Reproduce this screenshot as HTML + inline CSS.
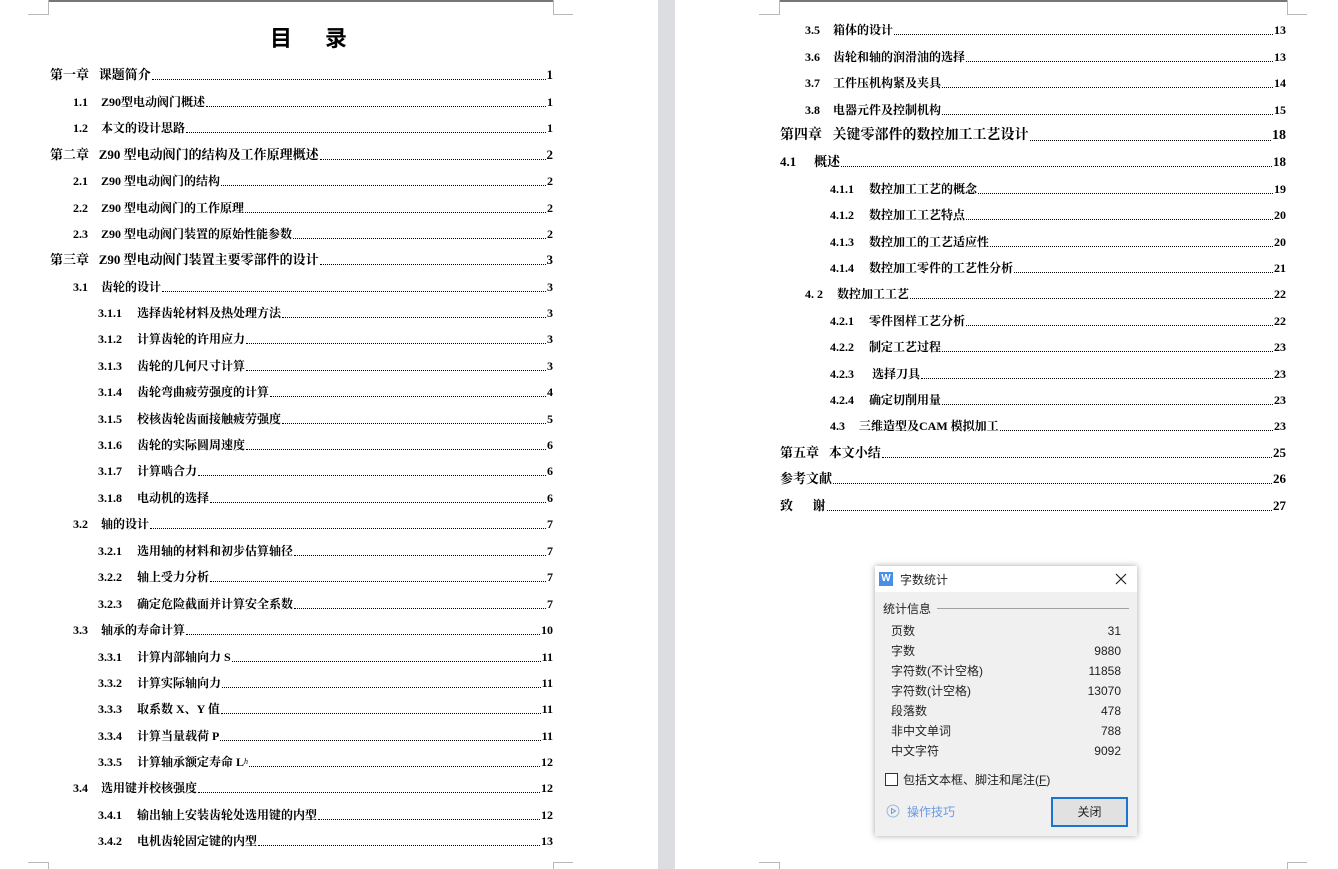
<!DOCTYPE html>
<html><head><meta charset="utf-8"><style>
body{margin:0;width:1338px;height:869px;background:#fff;position:relative;overflow:hidden;font-family:"Liberation Serif","Noto Serif CJK SC",serif;}
.gap{position:absolute;left:658px;top:0;width:17px;height:869px;background:#dcdde0}
.m{position:absolute;background:#b8b8b8}
.r{position:absolute;display:flex;align-items:flex-end;height:16px;line-height:16px;font-size:12px;font-weight:bold;color:#000;white-space:nowrap}
.r .d{flex:1;border-bottom:1px dotted #000;margin:0 1px 3px 1px}
.c{font-size:13px}
.n{display:inline-block}
.dlg{position:absolute;left:875px;top:566px;width:262px;height:270px;background:#f0f0f0;box-shadow:0 0 6px rgba(0,0,0,.35);font-family:"Liberation Sans","Noto Sans CJK SC",sans-serif;font-size:12px;color:#222}
</style></head><body>
<div class="gap"></div>
<div class="m" style="left:48px;top:0;width:505px;height:2px;background:#777"></div>
<div class="m" style="left:28px;top:14px;width:20px;height:1px"></div>
<div class="m" style="left:48px;top:0;width:1px;height:15px"></div>
<div class="m" style="left:553px;top:14px;width:20px;height:1px"></div>
<div class="m" style="left:553px;top:0;width:1px;height:15px"></div>
<div class="m" style="left:28px;top:862px;width:20px;height:1px"></div>
<div class="m" style="left:48px;top:862px;width:1px;height:7px"></div>
<div class="m" style="left:553px;top:862px;width:20px;height:1px"></div>
<div class="m" style="left:553px;top:862px;width:1px;height:7px"></div>
<div class="m" style="left:779px;top:0;width:508px;height:2px;background:#777"></div>
<div class="m" style="left:759px;top:14px;width:20px;height:1px"></div>
<div class="m" style="left:779px;top:0;width:1px;height:15px"></div>
<div class="m" style="left:1287px;top:14px;width:20px;height:1px"></div>
<div class="m" style="left:1287px;top:0;width:1px;height:15px"></div>
<div class="m" style="left:759px;top:862px;width:20px;height:1px"></div>
<div class="m" style="left:779px;top:862px;width:1px;height:7px"></div>
<div class="m" style="left:1287px;top:862px;width:20px;height:1px"></div>
<div class="m" style="left:1287px;top:862px;width:1px;height:7px"></div>

<div style="position:absolute;left:270px;top:24px;font-size:22px;font-weight:bold;font-family:'Noto Sans CJK SC',sans-serif;line-height:26px">目</div>
<div style="position:absolute;left:325px;top:24px;font-size:22px;font-weight:bold;font-family:'Noto Sans CJK SC',sans-serif;line-height:26px">录</div>

<div class="r c" style="left:50px;width:503px;top:67px">第一章&nbsp;&nbsp;&nbsp;课题简介<span class="d"></span>1</div>
<div class="r" style="left:73px;width:480px;top:94px"><span class="n" style="width:28px">1.1</span>Z90型电动阀门概述<span class="d"></span>1</div>
<div class="r" style="left:73px;width:480px;top:120px"><span class="n" style="width:28px">1.2</span>本文的设计思路<span class="d"></span>1</div>
<div class="r c" style="left:50px;width:503px;top:147px">第二章&nbsp;&nbsp;&nbsp;Z90 型电动阀门的结构及工作原理概述<span class="d"></span>2</div>
<div class="r" style="left:73px;width:480px;top:173px"><span class="n" style="width:28px">2.1</span>Z90 型电动阀门的结构<span class="d"></span>2</div>
<div class="r" style="left:73px;width:480px;top:200px"><span class="n" style="width:28px">2.2</span>Z90 型电动阀门的工作原理<span class="d"></span>2</div>
<div class="r" style="left:73px;width:480px;top:226px"><span class="n" style="width:28px">2.3</span>Z90 型电动阀门装置的原始性能参数<span class="d"></span>2</div>
<div class="r c" style="left:50px;width:503px;top:252px">第三章&nbsp;&nbsp;&nbsp;Z90 型电动阀门装置主要零部件的设计<span class="d"></span>3</div>
<div class="r" style="left:73px;width:480px;top:279px"><span class="n" style="width:28px">3.1</span>齿轮的设计<span class="d"></span>3</div>
<div class="r" style="left:98px;width:455px;top:305px"><span class="n" style="width:39px">3.1.1</span>选择齿轮材料及热处理方法<span class="d"></span>3</div>
<div class="r" style="left:98px;width:455px;top:331px"><span class="n" style="width:39px">3.1.2</span>计算齿轮的许用应力<span class="d"></span>3</div>
<div class="r" style="left:98px;width:455px;top:358px"><span class="n" style="width:39px">3.1.3</span>齿轮的几何尺寸计算<span class="d"></span>3</div>
<div class="r" style="left:98px;width:455px;top:384px"><span class="n" style="width:39px">3.1.4</span>齿轮弯曲疲劳强度的计算<span class="d"></span>4</div>
<div class="r" style="left:98px;width:455px;top:411px"><span class="n" style="width:39px">3.1.5</span>校核齿轮齿面接触疲劳强度<span class="d"></span>5</div>
<div class="r" style="left:98px;width:455px;top:437px"><span class="n" style="width:39px">3.1.6</span>齿轮的实际圆周速度<span class="d"></span>6</div>
<div class="r" style="left:98px;width:455px;top:463px"><span class="n" style="width:39px">3.1.7</span>计算啮合力<span class="d"></span>6</div>
<div class="r" style="left:98px;width:455px;top:490px"><span class="n" style="width:39px">3.1.8</span>电动机的选择<span class="d"></span>6</div>
<div class="r" style="left:73px;width:480px;top:516px"><span class="n" style="width:28px">3.2</span>轴的设计<span class="d"></span>7</div>
<div class="r" style="left:98px;width:455px;top:543px"><span class="n" style="width:39px">3.2.1</span>选用轴的材料和初步估算轴径<span class="d"></span>7</div>
<div class="r" style="left:98px;width:455px;top:569px"><span class="n" style="width:39px">3.2.2</span>轴上受力分析<span class="d"></span>7</div>
<div class="r" style="left:98px;width:455px;top:596px"><span class="n" style="width:39px">3.2.3</span>确定危险截面并计算安全系数<span class="d"></span>7</div>
<div class="r" style="left:73px;width:480px;top:622px"><span class="n" style="width:28px">3.3</span>轴承的寿命计算<span class="d"></span>10</div>
<div class="r" style="left:98px;width:455px;top:649px"><span class="n" style="width:39px">3.3.1</span>计算内部轴向力 S<span class="d"></span>11</div>
<div class="r" style="left:98px;width:455px;top:675px"><span class="n" style="width:39px">3.3.2</span>计算实际轴向力<span class="d"></span>11</div>
<div class="r" style="left:98px;width:455px;top:701px"><span class="n" style="width:39px">3.3.3</span>取系数 X、Y 值<span class="d"></span>11</div>
<div class="r" style="left:98px;width:455px;top:728px"><span class="n" style="width:39px">3.3.4</span>计算当量载荷 P<span class="d"></span>11</div>
<div class="r" style="left:98px;width:455px;top:754px"><span class="n" style="width:39px">3.3.5</span>计算轴承额定寿命 L<sub style="font-size:8px;font-weight:normal;font-style:italic">h</sub><span class="d"></span>12</div>
<div class="r" style="left:73px;width:480px;top:780px"><span class="n" style="width:28px">3.4</span>选用键并校核强度<span class="d"></span>12</div>
<div class="r" style="left:98px;width:455px;top:807px"><span class="n" style="width:39px">3.4.1</span>输出轴上安装齿轮处选用键的内型<span class="d"></span>12</div>
<div class="r" style="left:98px;width:455px;top:833px"><span class="n" style="width:39px">3.4.2</span>电机齿轮固定键的内型<span class="d"></span>13</div>

<div class="r" style="left:805px;width:481px;top:22px"><span class="n" style="width:28px">3.5</span>箱体的设计<span class="d"></span>13</div>
<div class="r" style="left:805px;width:481px;top:49px"><span class="n" style="width:28px">3.6</span>齿轮和轴的润滑油的选择<span class="d"></span>13</div>
<div class="r" style="left:805px;width:481px;top:75px"><span class="n" style="width:28px">3.7</span>工件压机构紧及夹具<span class="d"></span>14</div>
<div class="r" style="left:805px;width:481px;top:102px"><span class="n" style="width:28px">3.8</span>电器元件及控制机构<span class="d"></span>15</div>
<div class="r c" style="left:780px;width:506px;top:128px;font-size:14px">第四章&nbsp;&nbsp;&nbsp;关键零部件的数控加工工艺设计<span class="d"></span>18</div>
<div class="r c" style="left:780px;width:506px;top:154px"><span class="n" style="width:34px">4.1</span>概述<span class="d"></span>18</div>
<div class="r" style="left:830px;width:456px;top:181px"><span class="n" style="width:39px">4.1.1</span>数控加工工艺的概念<span class="d"></span>19</div>
<div class="r" style="left:830px;width:456px;top:207px"><span class="n" style="width:39px">4.1.2</span>数控加工工艺特点<span class="d"></span>20</div>
<div class="r" style="left:830px;width:456px;top:234px"><span class="n" style="width:39px">4.1.3</span>数控加工的工艺适应性<span class="d"></span>20</div>
<div class="r" style="left:830px;width:456px;top:260px"><span class="n" style="width:39px">4.1.4</span>数控加工零件的工艺性分析<span class="d"></span>21</div>
<div class="r" style="left:805px;width:481px;top:286px"><span class="n" style="width:32px">4. 2</span>数控加工工艺<span class="d"></span>22</div>
<div class="r" style="left:830px;width:456px;top:313px"><span class="n" style="width:39px">4.2.1</span>零件图样工艺分析<span class="d"></span>22</div>
<div class="r" style="left:830px;width:456px;top:339px"><span class="n" style="width:39px">4.2.2</span>制定工艺过程<span class="d"></span>23</div>
<div class="r" style="left:830px;width:456px;top:366px"><span class="n" style="width:42px">4.2.3</span>选择刀具<span class="d"></span>23</div>
<div class="r" style="left:830px;width:456px;top:392px"><span class="n" style="width:39px">4.2.4</span>确定切削用量<span class="d"></span>23</div>
<div class="r" style="left:830px;width:456px;top:418px"><span class="n" style="width:29px">4.3</span>三维造型及CAM 模拟加工<span class="d"></span>23</div>
<div class="r c" style="left:780px;width:506px;top:445px">第五章&nbsp;&nbsp;&nbsp;本文小结<span class="d"></span>25</div>
<div class="r c" style="left:780px;width:506px;top:471px">参考文献<span class="d"></span>26</div>
<div class="r c" style="left:780px;width:506px;top:498px">致&nbsp;&nbsp;&nbsp;&nbsp;&nbsp;&nbsp;谢<span class="d"></span>27</div>

<div class="dlg">
 <div style="position:absolute;left:0;top:0;width:262px;height:26px;background:#fff"></div>
 <div style="position:absolute;left:4px;top:6px;width:14px;height:14px;background:#4a8fe7;color:#fff;font-size:10px;line-height:14px;text-align:center;font-weight:bold">W</div>
 <div style="position:absolute;left:25px;top:5px;font-size:12px">字数统计</div>
 <svg style="position:absolute;left:240px;top:7px" width="12" height="12" viewBox="0 0 12 12"><path d="M1 1L11 11M11 1L1 11" stroke="#222" stroke-width="1.2"/></svg>
 <div style="position:absolute;left:8px;top:34px">统计信息</div>
 <div style="position:absolute;left:62px;top:42px;width:192px;height:1px;background:#a0a0a0"></div>
 <div style="position:absolute;left:16px;top:55px;width:230px;line-height:20px">
  <div style="display:flex;justify-content:space-between"><span>页数</span><span>31</span></div>
  <div style="display:flex;justify-content:space-between"><span>字数</span><span>9880</span></div>
  <div style="display:flex;justify-content:space-between"><span>字符数(不计空格)</span><span>11858</span></div>
  <div style="display:flex;justify-content:space-between"><span>字符数(计空格)</span><span>13070</span></div>
  <div style="display:flex;justify-content:space-between"><span>段落数</span><span>478</span></div>
  <div style="display:flex;justify-content:space-between"><span>非中文单词</span><span>788</span></div>
  <div style="display:flex;justify-content:space-between"><span>中文字符</span><span>9092</span></div>
 </div>
 <div style="position:absolute;left:10px;top:207px;width:11px;height:11px;border:1px solid #333;background:#fff"></div>
 <div style="position:absolute;left:28px;top:205px">包括文本框、脚注和尾注(<u>F</u>)</div>
 <svg style="position:absolute;left:11px;top:238px" width="14" height="14" viewBox="0 0 14 14"><circle cx="7" cy="7" r="6" fill="none" stroke="#9ab6e0"/><path d="M5.5 4.5L9.5 7L5.5 9.5Z" fill="none" stroke="#6a9ae0"/></svg>
 <div style="position:absolute;left:32px;top:237px;color:#6a9ae0">操作技巧</div>
 <div style="position:absolute;left:176px;top:231px;width:73px;height:26px;border:2px solid #1a74d0;background:#e1e1e1;text-align:center;line-height:26px">关闭</div>
</div>
</body></html>
